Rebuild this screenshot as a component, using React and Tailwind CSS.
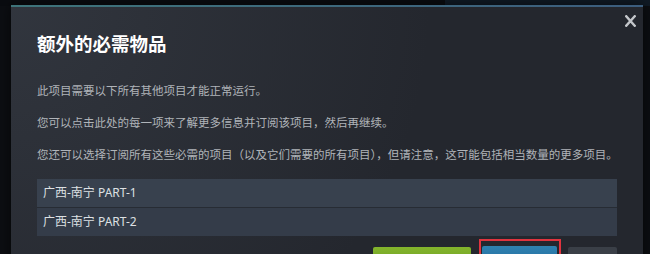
export default function App() {
    const items = ["广西-南宁 PART-1", "广西-南宁 PART-2"];

    return (
        <div className="relative w-[650px] h-[254px] overflow-hidden bg-[#0c0e12] font-['Noto_Sans','Noto_Sans_CJK_SC',sans-serif]">
            {/* page behind the dialog */}
            <div className="flex h-[6px]">
                <div className="flex-1 bg-[#0a0c10]"></div>
                <div className="w-[205px] bg-[#101a25]"></div>
            </div>

            {/* Dialog */}
            <div className="absolute left-[11px] top-[5px] w-[632px] h-[300px] bg-[#24272e] bg-[radial-gradient(circle_at_top_left,rgba(74,81,92,0.35)_0%,rgba(75,81,92,0)_60%)] shadow-[0_0_12px_rgba(0,0,0,0.6)]">
                <div className="h-[2px] bg-linear-to-r from-[#3e747a] to-[#3c5d7e]"></div>

                {/* Close */}
                <button className="absolute right-[2px] top-[5px] w-[22px] h-[22px] flex items-center justify-center text-[#c3c6ca]">
                    <svg className="w-[11px] h-[12px]" viewBox="0 0 11 12" fill="none" stroke="currentColor" strokeWidth="2.4" strokeLinecap="square">
                        <path d="M1.3 1.3l8.4 9.4M9.7 1.3l-8.4 9.4" />
                    </svg>
                </button>

                <div className="pl-[26px] pr-[26px] pt-[25px]">
                    <h2 className="text-[18.5px] leading-[24px] font-bold text-white">额外的必需物品</h2>

                    <div className="mt-[27px] text-[11.5px] leading-[16px] text-[#b0b4b9] flex flex-col gap-4">
                        <p>此项目需要以下所有其他项目才能正常运行。</p>
                        <p>您可以点击此处的每一项来了解更多信息并订阅该项目，然后再继续。</p>
                        <p className="whitespace-nowrap">您还可以选择订阅所有这些必需的项目（以及它们需要的所有项目），但请注意，这可能包括相当数量的更多项目。</p>
                    </div>

                    {/* Required items */}
                    <div className="mt-4 w-[580px] flex flex-col gap-px bg-[#272c34]">
                        {items.map((item, i) => (
                            <div
                                key={item}
                                className={`h-[28px] pl-[6px] flex items-center text-[12px] text-[#dde0e3] ${i === 0 ? "bg-[#38414e]" : "bg-[#343c49]"}`}
                            >
                                {item}
                            </div>
                        ))}
                    </div>

                    {/* Buttons (labels fall below the visible area) */}
                    <div className="mt-[11px] w-[580px] flex justify-end items-start gap-[10px]">
                        <button aria-label="订阅所有" className="w-[98px] h-[32px] rounded-[2px] bg-linear-to-b from-[#84b52c] to-[#5e8f1d]"></button>
                        <button aria-label="继续" className="relative w-[75px] h-[32px] -mt-[1px] ml-[1px] rounded-[2px] bg-linear-to-b from-[#2f82b0] to-[#1d5f96]">
                            <span className="absolute -left-[3px] -right-[4px] -top-[7px] -bottom-[6px] border-2 border-[#e0343f]"></span>
                        </button>
                        <button aria-label="取消" className="w-[49px] h-[32px] ml-[1px] rounded-[2px] bg-[#3a3f47]"></button>
                    </div>
                </div>
            </div>
        </div>
    );
}
